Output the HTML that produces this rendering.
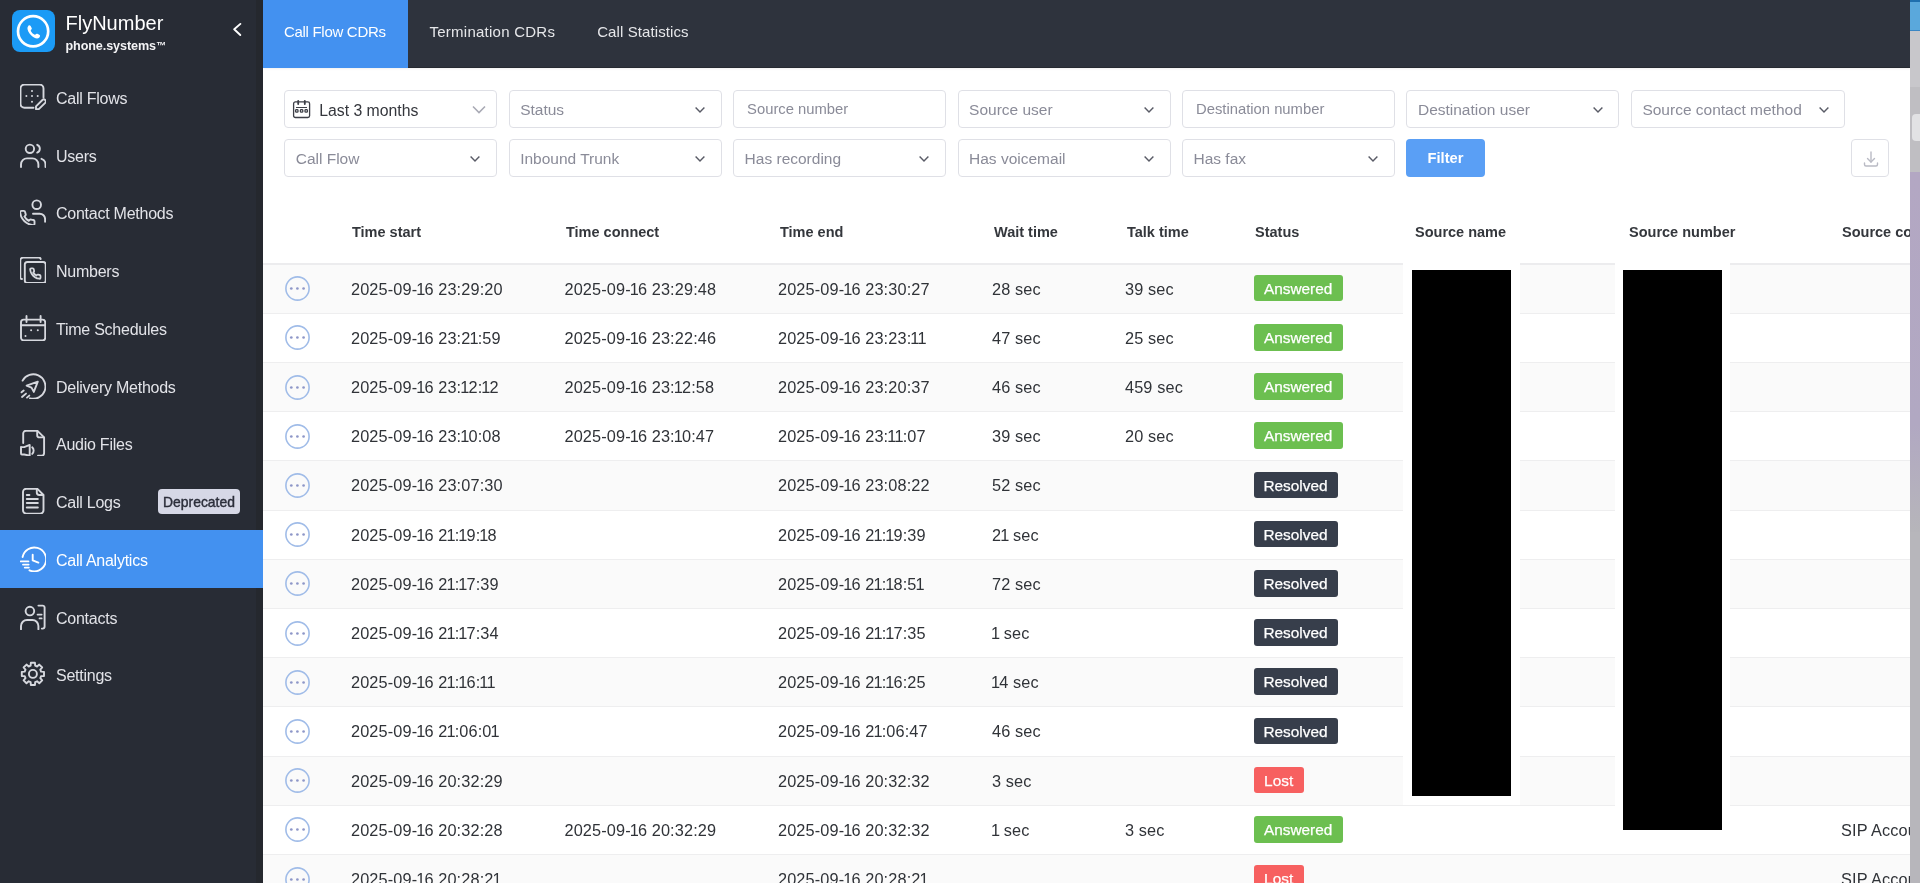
<!DOCTYPE html>
<html><head><meta charset="utf-8">
<style>
*{margin:0;padding:0;box-sizing:border-box}
html,body{width:1920px;height:883px;overflow:hidden;background:#fff;font-family:"Liberation Sans",sans-serif;-webkit-font-smoothing:antialiased}
#wrap{position:absolute;left:0;top:0;width:1920px;height:883px;will-change:transform}
.abs{position:absolute}
#sb{position:absolute;left:0;top:0;width:256px;height:883px;background:#282c35}
#sbedge{position:absolute;left:256px;top:0;width:7px;height:883px;background:#25282e}
#top{position:absolute;left:263px;top:0;width:1647px;height:68px;background:#2e333d;border-bottom:1px solid #262a31;box-shadow:0 1px 2px rgba(0,0,0,0.06)}
#strip{position:absolute;left:1910px;top:0;width:10px;height:883px;background:#b7b6bb}
.nav{position:absolute;left:0;width:263px;height:58px}
.nav .t{position:absolute;left:56px;top:2px;line-height:58px;font-size:16px;letter-spacing:-0.25px;color:#e2e3e8;white-space:nowrap}
.nav svg{position:absolute;left:20px;top:16px;width:26px;height:26px;fill:none;stroke:#d6d8de;stroke-width:1.9;stroke-linecap:round;stroke-linejoin:round}
.nav.act{background:#4391f0}
.nav.act .t{color:#fff}
.nav.act svg{stroke:#fff}
.tab{position:absolute;top:0;height:68px;line-height:64px;font-size:15px;color:#e6e7ea;white-space:nowrap}
.fbox{position:absolute;width:213px;height:38px;border:1px solid #dfe0e6;border-radius:4px;background:#fff}
.fbox .ph{position:absolute;left:10.5px;top:0.5px;line-height:36px;font-size:15.5px;color:#8a8b98;white-space:nowrap}
.fbox svg.ch{position:absolute;right:14.8px;top:15px;width:12px;height:8px;fill:none;stroke:#595b66;stroke-width:1.45}
.row{position:absolute;left:263px;width:1647px;height:49.2px;border-top:1px solid #eeeeef}
.row.g{background:#fafafa}
.cell{position:absolute;font-size:16.3px;color:#303338;white-space:nowrap;line-height:20px;letter-spacing:0.13px}
.o{letter-spacing:-0.87px;margin-left:-1px}
.hd{position:absolute;top:221.5px;font-size:14.5px;font-weight:bold;color:#34373c;white-space:nowrap;line-height:20px}
.badge{position:absolute;height:26.5px;line-height:28.5px;border-radius:3px;color:#fff;font-size:15.4px;text-align:center;white-space:nowrap;-webkit-text-stroke:0.25px #fff}
.ans{background:#6cbf50}
.res{background:#373e4b}
.lost{background:#f76060}
.dots{position:absolute;left:285px;width:25px;height:25px}
</style></head><body>

<div id="wrap">
<div id="sb"></div><div id="sbedge"></div>
<div class="abs" style="left:12px;top:9.5px;width:42.5px;height:42.6px;border-radius:8px;background:#1b9bf6"></div>
<svg class="abs" style="left:12px;top:9.5px" width="43" height="43" viewBox="0 0 43 43"><circle cx="21.1" cy="21.3" r="15.1" fill="none" stroke="#fff" stroke-width="2.7"/>
<g transform="translate(21.2 21.6) scale(0.86) translate(-21.5 -22.5)"><path d="M15.5 15.8c1.2-1.2 2.4-.9 3 .2l1.2 2.2c.5 1-.1 1.7-.8 2.3-.4.4-.3 1 .2 1.9.9 1.5 1.9 2.5 3.2 3.3.8.5 1.4.5 1.8.1.6-.6 1.3-1.2 2.3-.7l2.2 1.2c1 .6 1.3 1.8.1 3-1.6 1.6-3.7 1.6-6.3 0-3.1-1.9-5.1-4.2-6.6-6.9-1.2-2.4-1.5-5 .2-6.6z" fill="#fff"/></g></svg>
<div class="abs" style="left:65.5px;top:10.8px;font-size:20px;color:#fff;line-height:24px;white-space:nowrap">FlyNumber</div>
<div class="abs" style="left:65.5px;top:38px;font-size:12.6px;font-weight:bold;color:#f4f4f6;line-height:16px;white-space:nowrap;letter-spacing:-0.1px">phone.systems<span style="font-size:10px;position:relative;top:-1px">&#8482;</span></div>
<svg class="abs" style="left:228px;top:18px" width="20" height="22" viewBox="0 0 20 22"><path d="M12.4 5.9L6.2 11.3l6.1 5.7" fill="none" stroke="#fff" stroke-width="1.9" stroke-linecap="round" stroke-linejoin="round"/></svg>

<div class="nav" style="top:68.0px"><svg viewBox="0 0 26 26"><path d="M13.5 23.8H4.5A4 4 0 0 1 .5 19.8V4.5A4 4 0 0 1 4.5.5h15a4 4 0 0 1 4 4v9"/><circle cx="12" cy="6.9" r="1" fill="#d6d8de" stroke="none"/><circle cx="6.4" cy="12.1" r="1" fill="#d6d8de" stroke="none"/><circle cx="12" cy="12.1" r="1" fill="#d6d8de" stroke="none"/><circle cx="17.7" cy="12.1" r="1" fill="#d6d8de" stroke="none"/><circle cx="12" cy="17.7" r="1" fill="#d6d8de" stroke="none"/><path d="M16 25.2v-2.8l6.4-6.4a1.9 1.9 0 0 1 2.8 2.8l-6.4 6.4z"/></svg><div class="t">Call Flows</div></div>
<div class="nav" style="top:125.73px"><svg viewBox="0 0 26 26"><circle cx="9.9" cy="6.8" r="4.2"/><path d="M17.2 2.8a4.2 4.2 0 0 1 0 7.8"/><path d="M1 25v-2.6a6 6 0 0 1 6-6h5.4a6 6 0 0 1 6 6V25"/><path d="M21.5 16.8a6 6 0 0 1 4 5.6V25"/></svg><div class="t">Users</div></div>
<div class="nav" style="top:183.46px"><svg viewBox="0 0 26 26"><circle cx="16.7" cy="5.7" r="4.3"/><path d="M13 14.7h6.7a5.4 5.4 0 0 1 5.4 5.4v2.6"/><g transform="translate(-0.6 10.4) scale(0.72)"><path stroke-width="2.6" d="M21 17.2v2.8a2 2 0 0 1-2.2 2A19.8 19.8 0 0 1 10.2 19a19.5 19.5 0 0 1-6-6A19.8 19.8 0 0 1 1.1 4.3 2 2 0 0 1 3.1 2h2.9a2 2 0 0 1 2 1.7c.1 1 .4 1.9.7 2.8a2 2 0 0 1-.5 2.1L7 9.9a16 16 0 0 0 6 6l1.3-1.3a2 2 0 0 1 2.1-.5c.9.3 1.8.6 2.8.7a2 2 0 0 1 1.8 2.4z"/></g></svg><div class="t">Contact Methods</div></div>
<div class="nav" style="top:241.19px"><svg viewBox="0 0 26 26"><path d="M2 22H1.8A1.5 1.5 0 0 1 .3 20.5V3.5A3 3 0 0 1 3.3.5h15.4a2 2 0 0 1 2 1.5"/><rect x="4.8" y="5" width="20.9" height="21" rx="2.6"/><g transform="translate(9.6 10.3) scale(0.52)"><path stroke-width="3.4" d="M21 17.2v2.8a2 2 0 0 1-2.2 2A19.8 19.8 0 0 1 10.2 19a19.5 19.5 0 0 1-6-6A19.8 19.8 0 0 1 1.1 4.3 2 2 0 0 1 3.1 2h2.9a2 2 0 0 1 2 1.7c.1 1 .4 1.9.7 2.8a2 2 0 0 1-.5 2.1L7 9.9a16 16 0 0 0 6 6l1.3-1.3a2 2 0 0 1 2.1-.5c.9.3 1.8.6 2.8.7a2 2 0 0 1 1.8 2.4z"/></g></svg><div class="t">Numbers</div></div>
<div class="nav" style="top:298.92px"><svg viewBox="0 0 26 26"><rect x="1" y="4.6" width="24.2" height="20.8" rx="2.6"/><path d="M1 10.2h24.2"/><path d="M6.5 1v6"/><path d="M20.6 1v6"/><circle cx="11.1" cy="15.3" r="1" fill="#d6d8de" stroke="none"/><circle cx="17.8" cy="15.3" r="1" fill="#d6d8de" stroke="none"/><circle cx="5.5" cy="21" r="1" fill="#d6d8de" stroke="none"/></svg><div class="t">Time Schedules</div></div>
<div class="nav" style="top:356.65px"><svg viewBox="0 0 26 26"><path d="M2.6 7.6A12.2 12.2 0 1 1 10 25.3"/><path d="M17.8 8.6L6.6 12.6l4.9 2 2.3 4.3z"/><path d="M1.5 19.3l2.2-1.8"/><path d="M2 24l4-3.4"/><path d="M7 24.6l2.3-2"/></svg><div class="t">Delivery Methods</div></div>
<div class="nav" style="top:414.38px"><svg viewBox="0 0 26 26"><path d="M3.2 13V3.6A2.8 2.8 0 0 1 6 .8h11.5l6.6 6.6v15.6a2.8 2.8 0 0 1-2.8 2.8H18"/><path d="M17.2 1v4.2a2.2 2.2 0 0 0 2.2 2.2h4.4"/><path d="M1 17v6.6a.9.9 0 0 0 .9.9h2.3l5.5 1.2V14.9l-5.5 2.2H1.9a.9.9 0 0 0-.9.9z"/><path d="M12.2 17.3a4.5 4.5 0 0 1 0 6.6"/></svg><div class="t">Audio Files</div></div>
<div class="nav" style="top:472.11px"><svg viewBox="0 0 26 26"><path d="M3 4a3.3 3.3 0 0 1 3.3-3.3h10.9l6.3 6.3v15.3a3.3 3.3 0 0 1-3.3 3.3H6.3A3.3 3.3 0 0 1 3 22.3z"/><path d="M16.8 1v3.6a2.4 2.4 0 0 0 2.4 2.4h4"/><path d="M6.8 7.1h2.6" stroke-width="2"/><path d="M6.8 11.1h11" stroke-width="2"/><path d="M6.8 15.1h11" stroke-width="2"/><path d="M6.8 19.4h11" stroke-width="2"/></svg><div class="t">Call Logs</div></div>
<div class="nav act" style="top:529.84px"><svg viewBox="0 0 26 26"><path d="M2.6 11A11.9 11.9 0 1 1 9.5 24.3"/><path d="M12.7 8.7v5.7l5.7 2.2"/><path d="M.8 15.4h7.6"/><path d="M3 18.6h5.6"/><path d="M4.8 21.6h4"/></svg><div class="t">Call Analytics</div></div>
<div class="nav" style="top:587.57px"><svg viewBox="0 0 26 26"><circle cx="9.9" cy="7.1" r="4.3"/><path d="M1 25.3v-3.3a6 6 0 0 1 6-6h5.4a6 6 0 0 1 6 6v3.3"/><path d="M18.4 1.6h4.2a2 2 0 0 1 2 2V22.6a2 2 0 0 1-2 2H21.8"/><path d="M17.6 10.6h4"/><path d="M19.6 14.4h2"/></svg><div class="t">Contacts</div></div>
<div class="nav" style="top:645.3px"><svg viewBox="0 0 26 26"><path d="M10.63 4.71L10.84 1.79L14.96 1.79L15.17 4.71L17.09 5.50L19.30 3.59L22.21 6.50L20.30 8.71L21.09 10.63L24.01 10.84L24.01 14.96L21.09 15.17L20.30 17.09L22.21 19.30L19.30 22.21L17.09 20.30L15.17 21.09L14.96 24.01L10.84 24.01L10.63 21.09L8.71 20.30L6.50 22.21L3.59 19.30L5.50 17.09L4.71 15.17L1.79 14.96L1.79 10.84L4.71 10.63L5.50 8.71L3.59 6.50L6.50 3.59L8.71 5.50Z"/><circle cx="12.9" cy="12.9" r="4"/></svg><div class="t">Settings</div></div>
<div class="abs" style="left:158px;top:489px;width:82px;height:25px;border-radius:4px;background:#d6d8e6;color:#2b2e3a;font-size:13.9px;-webkit-text-stroke:0.4px #2b2e3a;line-height:27.5px;text-align:center">Deprecated</div>
<div id="top"></div>
<div class="abs" style="left:263px;top:0;width:145px;height:68px;background:#4391f0"></div>
<div class="tab" style="left:284px;color:#fff;letter-spacing:-0.3px">Call Flow CDRs</div>
<div class="tab" style="left:429.5px;letter-spacing:0.25px">Termination CDRs</div>
<div class="tab" style="left:597.2px;letter-spacing:0.1px">Call Statistics</div>
<div class="fbox" style="left:284.2px;top:90px"><svg class="abs" style="left:7px;top:7.7px" width="20" height="20" viewBox="0 0 20 20" fill="none" stroke="#3d3f47" stroke-width="1.3"><rect x="1.6" y="2.9" width="16" height="15.6" rx="1.8"/><path d="M4 8.5h11" stroke-width="1"/><path d="M6.2 1.8v3.2M12.8 1.8v3.2" stroke-width="1.8" stroke-linecap="round"/><rect x="3.6" y="10.6" width="2.4" height="2.6" rx=".8"/><rect x="8.4" y="10.6" width="2.4" height="2.6" rx=".8"/><rect x="13" y="10.6" width="2.4" height="2.6" rx=".8"/></svg><div class="ph" style="left:34px;color:#34363c;font-size:15.8px;top:1.5px">Last 3 months</div><svg class="abs" style="left:187px;top:14px;width:14px;height:9px" viewBox="0 0 14 9" fill="none" stroke="#a9aab5" stroke-width="1.6"><path d="M1 1.5l6 6 6-6"/></svg></div>
<div class="fbox" style="left:508.65px;top:90px"><div class="ph">Status</div><svg class="ch" viewBox="0 0 12 8"><path d="M1.6 1.6l4.4 4.4 4.4-4.4"/></svg></div>
<div class="fbox" style="left:733.1px;top:90px"><div class="ph" style="left:13px;font-size:14.8px;top:0px">Source number</div></div>
<div class="fbox" style="left:957.55px;top:90px"><div class="ph">Source user</div><svg class="ch" viewBox="0 0 12 8"><path d="M1.6 1.6l4.4 4.4 4.4-4.4"/></svg></div>
<div class="fbox" style="left:1182.0px;top:90px"><div class="ph" style="left:13px;font-size:14.8px;top:0px">Destination number</div></div>
<div class="fbox" style="left:1406.45px;top:90px"><div class="ph">Destination user</div><svg class="ch" viewBox="0 0 12 8"><path d="M1.6 1.6l4.4 4.4 4.4-4.4"/></svg></div>
<div class="fbox" style="left:1630.9px;top:90px;width:214.5px"><div class="ph">Source contact method</div><svg class="ch" viewBox="0 0 12 8"><path d="M1.6 1.6l4.4 4.4 4.4-4.4"/></svg></div>
<div class="fbox" style="left:284.2px;top:139px"><div class="ph">Call Flow</div><svg class="ch" viewBox="0 0 12 8"><path d="M1.6 1.6l4.4 4.4 4.4-4.4"/></svg></div>
<div class="fbox" style="left:508.65px;top:139px"><div class="ph">Inbound Trunk</div><svg class="ch" viewBox="0 0 12 8"><path d="M1.6 1.6l4.4 4.4 4.4-4.4"/></svg></div>
<div class="fbox" style="left:733.1px;top:139px"><div class="ph">Has recording</div><svg class="ch" viewBox="0 0 12 8"><path d="M1.6 1.6l4.4 4.4 4.4-4.4"/></svg></div>
<div class="fbox" style="left:957.55px;top:139px"><div class="ph">Has voicemail</div><svg class="ch" viewBox="0 0 12 8"><path d="M1.6 1.6l4.4 4.4 4.4-4.4"/></svg></div>
<div class="fbox" style="left:1182.0px;top:139px"><div class="ph">Has fax</div><svg class="ch" viewBox="0 0 12 8"><path d="M1.6 1.6l4.4 4.4 4.4-4.4"/></svg></div>
<div class="abs" style="left:1406px;top:139px;width:79px;height:38px;border-radius:4px;background:#5a9ff5;color:#fff;font-weight:bold;font-size:14.7px;line-height:38px;text-align:center">Filter</div>
<div class="abs" style="left:1851px;top:139px;width:38px;height:38px;border:1px solid #dfe0e6;border-radius:4px"><svg class="abs" style="left:9px;top:9px" width="20" height="20" viewBox="0 0 20 20" fill="none" stroke="#b9bac4" stroke-width="1.4" stroke-linecap="round"><path d="M10 3v10"/><path d="M6.5 9.5L10 13l3.5-3.5"/><path d="M3.5 14v1.5a1.5 1.5 0 0 0 1.5 1.5h10a1.5 1.5 0 0 0 1.5-1.5V14"/></svg></div>
<div class="hd" style="left:352px">Time start</div>
<div class="hd" style="left:566px">Time connect</div>
<div class="hd" style="left:780px">Time end</div>
<div class="hd" style="left:994px">Wait time</div>
<div class="hd" style="left:1127px">Talk time</div>
<div class="hd" style="left:1255px">Status</div>
<div class="hd" style="left:1415px">Source name</div>
<div class="hd" style="left:1629px">Source number</div>
<div class="hd" style="left:1842px">Source co</div>
<div class="row g" style="top:263.60px"></div>
<div class="row" style="top:312.80px"></div>
<div class="row g" style="top:362.00px"></div>
<div class="row" style="top:411.20px"></div>
<div class="row g" style="top:460.40px"></div>
<div class="row" style="top:509.60px"></div>
<div class="row g" style="top:558.80px"></div>
<div class="row" style="top:608.00px"></div>
<div class="row g" style="top:657.20px"></div>
<div class="row" style="top:706.40px"></div>
<div class="row g" style="top:755.60px"></div>
<div class="row" style="top:804.80px"></div>
<div class="row g" style="top:854.00px"></div>
<svg class="dots" style="top:276.10px;left:285.3px" viewBox="0 0 25 25"><circle cx="12.5" cy="12.5" r="11.6" fill="none" stroke="#a0bce8" stroke-width="1.6"/><circle cx="6.3" cy="12.5" r="1.35" fill="#8e97c8"/><circle cx="12.4" cy="12.5" r="1.35" fill="#8e97c8"/><circle cx="18.6" cy="12.5" r="1.35" fill="#8e97c8"/></svg>
<div class="cell" style="left:351px;top:278.60px">2025-09-<span class="o">1</span>6 23:29:20</div>
<div class="cell" style="left:564.5px;top:278.60px">2025-09-<span class="o">1</span>6 23:29:48</div>
<div class="cell" style="left:778px;top:278.60px">2025-09-<span class="o">1</span>6 23:30:27</div>
<div class="cell" style="left:992px;top:278.60px">28 sec</div>
<div class="cell" style="left:1125px;top:278.60px">39 sec</div>
<div class="badge ans" style="left:1253.5px;width:89.3px;top:274.80px">Answered</div>
<svg class="dots" style="top:325.30px;left:285.3px" viewBox="0 0 25 25"><circle cx="12.5" cy="12.5" r="11.6" fill="none" stroke="#a0bce8" stroke-width="1.6"/><circle cx="6.3" cy="12.5" r="1.35" fill="#8e97c8"/><circle cx="12.4" cy="12.5" r="1.35" fill="#8e97c8"/><circle cx="18.6" cy="12.5" r="1.35" fill="#8e97c8"/></svg>
<div class="cell" style="left:351px;top:327.80px">2025-09-<span class="o">1</span>6 23:2<span class="o">1</span>:59</div>
<div class="cell" style="left:564.5px;top:327.80px">2025-09-<span class="o">1</span>6 23:22:46</div>
<div class="cell" style="left:778px;top:327.80px">2025-09-<span class="o">1</span>6 23:23:<span class="o">1</span><span class="o">1</span></div>
<div class="cell" style="left:992px;top:327.80px">47 sec</div>
<div class="cell" style="left:1125px;top:327.80px">25 sec</div>
<div class="badge ans" style="left:1253.5px;width:89.3px;top:324.00px">Answered</div>
<svg class="dots" style="top:374.50px;left:285.3px" viewBox="0 0 25 25"><circle cx="12.5" cy="12.5" r="11.6" fill="none" stroke="#a0bce8" stroke-width="1.6"/><circle cx="6.3" cy="12.5" r="1.35" fill="#8e97c8"/><circle cx="12.4" cy="12.5" r="1.35" fill="#8e97c8"/><circle cx="18.6" cy="12.5" r="1.35" fill="#8e97c8"/></svg>
<div class="cell" style="left:351px;top:377.00px">2025-09-<span class="o">1</span>6 23:<span class="o">1</span>2:<span class="o">1</span>2</div>
<div class="cell" style="left:564.5px;top:377.00px">2025-09-<span class="o">1</span>6 23:<span class="o">1</span>2:58</div>
<div class="cell" style="left:778px;top:377.00px">2025-09-<span class="o">1</span>6 23:20:37</div>
<div class="cell" style="left:992px;top:377.00px">46 sec</div>
<div class="cell" style="left:1125px;top:377.00px">459 sec</div>
<div class="badge ans" style="left:1253.5px;width:89.3px;top:373.20px">Answered</div>
<svg class="dots" style="top:423.70px;left:285.3px" viewBox="0 0 25 25"><circle cx="12.5" cy="12.5" r="11.6" fill="none" stroke="#a0bce8" stroke-width="1.6"/><circle cx="6.3" cy="12.5" r="1.35" fill="#8e97c8"/><circle cx="12.4" cy="12.5" r="1.35" fill="#8e97c8"/><circle cx="18.6" cy="12.5" r="1.35" fill="#8e97c8"/></svg>
<div class="cell" style="left:351px;top:426.20px">2025-09-<span class="o">1</span>6 23:<span class="o">1</span>0:08</div>
<div class="cell" style="left:564.5px;top:426.20px">2025-09-<span class="o">1</span>6 23:<span class="o">1</span>0:47</div>
<div class="cell" style="left:778px;top:426.20px">2025-09-<span class="o">1</span>6 23:<span class="o">1</span><span class="o">1</span>:07</div>
<div class="cell" style="left:992px;top:426.20px">39 sec</div>
<div class="cell" style="left:1125px;top:426.20px">20 sec</div>
<div class="badge ans" style="left:1253.5px;width:89.3px;top:422.40px">Answered</div>
<svg class="dots" style="top:472.90px;left:285.3px" viewBox="0 0 25 25"><circle cx="12.5" cy="12.5" r="11.6" fill="none" stroke="#a0bce8" stroke-width="1.6"/><circle cx="6.3" cy="12.5" r="1.35" fill="#8e97c8"/><circle cx="12.4" cy="12.5" r="1.35" fill="#8e97c8"/><circle cx="18.6" cy="12.5" r="1.35" fill="#8e97c8"/></svg>
<div class="cell" style="left:351px;top:475.40px">2025-09-<span class="o">1</span>6 23:07:30</div>
<div class="cell" style="left:778px;top:475.40px">2025-09-<span class="o">1</span>6 23:08:22</div>
<div class="cell" style="left:992px;top:475.40px">52 sec</div>
<div class="badge res" style="left:1253.5px;width:84px;top:471.60px">Resolved</div>
<svg class="dots" style="top:522.10px;left:285.3px" viewBox="0 0 25 25"><circle cx="12.5" cy="12.5" r="11.6" fill="none" stroke="#a0bce8" stroke-width="1.6"/><circle cx="6.3" cy="12.5" r="1.35" fill="#8e97c8"/><circle cx="12.4" cy="12.5" r="1.35" fill="#8e97c8"/><circle cx="18.6" cy="12.5" r="1.35" fill="#8e97c8"/></svg>
<div class="cell" style="left:351px;top:524.60px">2025-09-<span class="o">1</span>6 2<span class="o">1</span>:<span class="o">1</span>9:<span class="o">1</span>8</div>
<div class="cell" style="left:778px;top:524.60px">2025-09-<span class="o">1</span>6 2<span class="o">1</span>:<span class="o">1</span>9:39</div>
<div class="cell" style="left:992px;top:524.60px">2<span class="o">1</span> sec</div>
<div class="badge res" style="left:1253.5px;width:84px;top:520.80px">Resolved</div>
<svg class="dots" style="top:571.30px;left:285.3px" viewBox="0 0 25 25"><circle cx="12.5" cy="12.5" r="11.6" fill="none" stroke="#a0bce8" stroke-width="1.6"/><circle cx="6.3" cy="12.5" r="1.35" fill="#8e97c8"/><circle cx="12.4" cy="12.5" r="1.35" fill="#8e97c8"/><circle cx="18.6" cy="12.5" r="1.35" fill="#8e97c8"/></svg>
<div class="cell" style="left:351px;top:573.80px">2025-09-<span class="o">1</span>6 2<span class="o">1</span>:<span class="o">1</span>7:39</div>
<div class="cell" style="left:778px;top:573.80px">2025-09-<span class="o">1</span>6 2<span class="o">1</span>:<span class="o">1</span>8:5<span class="o">1</span></div>
<div class="cell" style="left:992px;top:573.80px">72 sec</div>
<div class="badge res" style="left:1253.5px;width:84px;top:570.00px">Resolved</div>
<svg class="dots" style="top:620.50px;left:285.3px" viewBox="0 0 25 25"><circle cx="12.5" cy="12.5" r="11.6" fill="none" stroke="#a0bce8" stroke-width="1.6"/><circle cx="6.3" cy="12.5" r="1.35" fill="#8e97c8"/><circle cx="12.4" cy="12.5" r="1.35" fill="#8e97c8"/><circle cx="18.6" cy="12.5" r="1.35" fill="#8e97c8"/></svg>
<div class="cell" style="left:351px;top:623.00px">2025-09-<span class="o">1</span>6 2<span class="o">1</span>:<span class="o">1</span>7:34</div>
<div class="cell" style="left:778px;top:623.00px">2025-09-<span class="o">1</span>6 2<span class="o">1</span>:<span class="o">1</span>7:35</div>
<div class="cell" style="left:992px;top:623.00px"><span class="o">1</span> sec</div>
<div class="badge res" style="left:1253.5px;width:84px;top:619.20px">Resolved</div>
<svg class="dots" style="top:669.70px;left:285.3px" viewBox="0 0 25 25"><circle cx="12.5" cy="12.5" r="11.6" fill="none" stroke="#a0bce8" stroke-width="1.6"/><circle cx="6.3" cy="12.5" r="1.35" fill="#8e97c8"/><circle cx="12.4" cy="12.5" r="1.35" fill="#8e97c8"/><circle cx="18.6" cy="12.5" r="1.35" fill="#8e97c8"/></svg>
<div class="cell" style="left:351px;top:672.20px">2025-09-<span class="o">1</span>6 2<span class="o">1</span>:<span class="o">1</span>6:<span class="o">1</span><span class="o">1</span></div>
<div class="cell" style="left:778px;top:672.20px">2025-09-<span class="o">1</span>6 2<span class="o">1</span>:<span class="o">1</span>6:25</div>
<div class="cell" style="left:992px;top:672.20px"><span class="o">1</span>4 sec</div>
<div class="badge res" style="left:1253.5px;width:84px;top:668.40px">Resolved</div>
<svg class="dots" style="top:718.90px;left:285.3px" viewBox="0 0 25 25"><circle cx="12.5" cy="12.5" r="11.6" fill="none" stroke="#a0bce8" stroke-width="1.6"/><circle cx="6.3" cy="12.5" r="1.35" fill="#8e97c8"/><circle cx="12.4" cy="12.5" r="1.35" fill="#8e97c8"/><circle cx="18.6" cy="12.5" r="1.35" fill="#8e97c8"/></svg>
<div class="cell" style="left:351px;top:721.40px">2025-09-<span class="o">1</span>6 2<span class="o">1</span>:06:0<span class="o">1</span></div>
<div class="cell" style="left:778px;top:721.40px">2025-09-<span class="o">1</span>6 2<span class="o">1</span>:06:47</div>
<div class="cell" style="left:992px;top:721.40px">46 sec</div>
<div class="badge res" style="left:1253.5px;width:84px;top:717.60px">Resolved</div>
<svg class="dots" style="top:768.10px;left:285.3px" viewBox="0 0 25 25"><circle cx="12.5" cy="12.5" r="11.6" fill="none" stroke="#a0bce8" stroke-width="1.6"/><circle cx="6.3" cy="12.5" r="1.35" fill="#8e97c8"/><circle cx="12.4" cy="12.5" r="1.35" fill="#8e97c8"/><circle cx="18.6" cy="12.5" r="1.35" fill="#8e97c8"/></svg>
<div class="cell" style="left:351px;top:770.60px">2025-09-<span class="o">1</span>6 20:32:29</div>
<div class="cell" style="left:778px;top:770.60px">2025-09-<span class="o">1</span>6 20:32:32</div>
<div class="cell" style="left:992px;top:770.60px">3 sec</div>
<div class="badge lost" style="left:1253.5px;width:50.3px;top:766.80px">Lost</div>
<svg class="dots" style="top:817.30px;left:285.3px" viewBox="0 0 25 25"><circle cx="12.5" cy="12.5" r="11.6" fill="none" stroke="#a0bce8" stroke-width="1.6"/><circle cx="6.3" cy="12.5" r="1.35" fill="#8e97c8"/><circle cx="12.4" cy="12.5" r="1.35" fill="#8e97c8"/><circle cx="18.6" cy="12.5" r="1.35" fill="#8e97c8"/></svg>
<div class="cell" style="left:351px;top:819.80px">2025-09-<span class="o">1</span>6 20:32:28</div>
<div class="cell" style="left:564.5px;top:819.80px">2025-09-<span class="o">1</span>6 20:32:29</div>
<div class="cell" style="left:778px;top:819.80px">2025-09-<span class="o">1</span>6 20:32:32</div>
<div class="cell" style="left:992px;top:819.80px"><span class="o">1</span> sec</div>
<div class="cell" style="left:1125px;top:819.80px">3 sec</div>
<div class="badge ans" style="left:1253.5px;width:89.3px;top:816.00px">Answered</div>
<div class="cell" style="left:1841px;top:819.80px">SIP Accou</div>
<svg class="dots" style="top:866.50px;left:285.3px" viewBox="0 0 25 25"><circle cx="12.5" cy="12.5" r="11.6" fill="none" stroke="#a0bce8" stroke-width="1.6"/><circle cx="6.3" cy="12.5" r="1.35" fill="#8e97c8"/><circle cx="12.4" cy="12.5" r="1.35" fill="#8e97c8"/><circle cx="18.6" cy="12.5" r="1.35" fill="#8e97c8"/></svg>
<div class="cell" style="left:351px;top:869.00px">2025-09-<span class="o">1</span>6 20:28:2<span class="o">1</span></div>
<div class="cell" style="left:778px;top:869.00px">2025-09-<span class="o">1</span>6 20:28:2<span class="o">1</span></div>
<div class="badge lost" style="left:1253.5px;width:50.3px;top:865.20px">Lost</div>
<div class="cell" style="left:1841px;top:869.00px">SIP Accou</div>
<div class="abs" style="left:263px;top:262.6px;width:1647px;height:2px;background:#ececee"></div>
<div class="abs" style="left:1403px;top:258px;width:117px;height:547px;background:#fff"></div>
<div class="abs" style="left:1412px;top:270px;width:99px;height:526px;background:#000"></div>
<div class="abs" style="left:1614.5px;top:258px;width:115.5px;height:596px;background:#fff"></div>
<div class="abs" style="left:1623px;top:270px;width:99px;height:560px;background:#000"></div>
<div id="strip"></div>
<div class="abs" style="left:1910px;top:0;width:10px;height:2px;background:#1f6fae"></div>
<div class="abs" style="left:1910px;top:2px;width:10px;height:28px;background:#5aa8dc"></div>
<div class="abs" style="left:1910px;top:30px;width:10px;height:1px;background:#3a86c4"></div>
<div class="abs" style="left:1910px;top:31px;width:10px;height:56px;background:#c8c7cb"></div>
<div class="abs" style="left:1910px;top:87px;width:10px;height:85px;background:#bfbec2"></div>
<div class="abs" style="left:1912px;top:114px;width:8px;height:27px;background:#e2e2e4;border-radius:4px 0 0 4px"></div>
<div class="abs" style="left:1910px;top:172px;width:10px;height:360px;background:linear-gradient(#b3a7c3,#b1a8c2 70%,#b6b5ba)"></div>
</div></body></html>
